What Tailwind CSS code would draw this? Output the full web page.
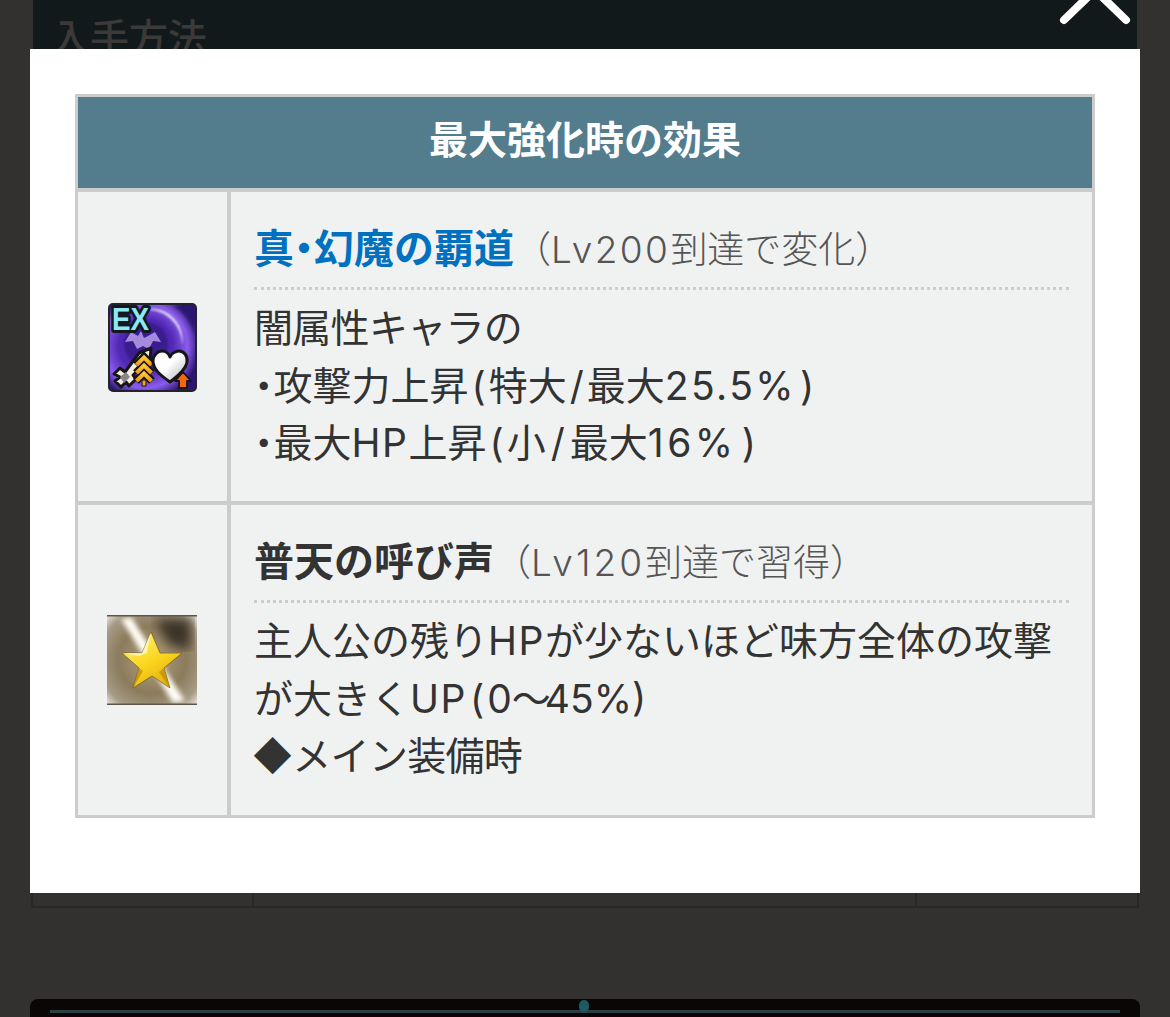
<!DOCTYPE html>
<html lang="ja">
<head>
    <meta charset="UTF-8">
    <meta name="viewport" content="width=device-width, initial-scale=1.0">
    <title>最大強化時の効果</title>
    <script src="https://cdn.jsdelivr.net/npm/@tailwindcss/browser@4"></script>
</head>
<body class="bg-[#323130] font-['Inter','Noto_Sans_CJK_JP','Noto_Sans',sans-serif]">
    <div class="relative w-[1170px] h-[1017px] overflow-hidden">

        <!-- Page behind the overlay -->
        <div class="flex flex-col px-[31px] h-full">
            <section class="h-[560px] shrink-0 px-[2px]">
                <div class="h-[49px] bg-[#12191b] px-[18px] pt-[13px] overflow-hidden">
                    <h2 class="text-[39px] leading-[50px] font-medium text-[#3b3a39]">入手方法</h2>
                </div>
            </section>
            <div class="h-[348px] shrink-0 flex border-2 border-t-0 border-[#282828]">
                <div class="w-[221px] border-r-2 border-[#282828]"></div>
                <div class="flex-1 border-r-2 border-[#282828]"></div>
                <div class="w-[220px]"></div>
            </div>
            <div class="mt-[91px] h-[18px] shrink-0 -mx-px bg-[#0a0605] rounded-t-[8px] relative overflow-hidden">
                <div class="h-[3px] bg-[#2c3f42] absolute inset-x-[20px] top-[11px]"></div>
                <div class="absolute left-[549px] top-[1px] w-[10px] h-[12px] rounded-full bg-[#1e5a63]"></div>
            </div>
        </div>

        <!-- Close button -->
        <svg class="absolute left-[1055px] top-[-20px]" width="80" height="50" viewBox="0 0 80 50" fill="none" stroke="#fff" stroke-width="8" stroke-linecap="round">
            <path d="M9 40 L40 10 L71 40"/>
        </svg>

        <!-- Modal -->
        <div class="absolute left-[30px] top-[49px] w-[1110px] h-[844px] bg-white pt-[45px] px-[45px]">
            <div class="border-[3px] border-[#cccccc] bg-[#f0f2f2]">
                <div class="h-[87px] pb-[4px] bg-[#537c8d] border-b-4 border-[#cccccc] box-content flex items-center justify-center text-white text-[39px] font-bold">最大強化時の効果</div>

                <!-- Row 1 -->
                <div class="flex h-[309px] border-b-4 border-[#cccccc] box-content">
                    <div class="w-[149px] flex items-center justify-center border-r-4 border-[#cccccc] box-content">
                        <svg class="ml-[-1px] mt-[2px]" width="89" height="89" viewBox="0 0 89 89">
                            <defs>
                                <radialGradient id="exBg" cx="42%" cy="48%" r="62%">
                                    <stop offset="0" stop-color="#4a2a9c"/>
                                    <stop offset="0.5" stop-color="#5128b4"/>
                                    <stop offset="0.78" stop-color="#8a5cec"/>
                                    <stop offset="1" stop-color="#2c1670"/>
                                </radialGradient>
                                <linearGradient id="chev" x1="0" y1="0" x2="0" y2="1">
                                    <stop offset="0" stop-color="#ffc93a"/>
                                    <stop offset="1" stop-color="#f09a10"/>
                                </linearGradient>
                                <linearGradient id="heart" x1="0" y1="0" x2="1" y2="1">
                                    <stop offset="0.45" stop-color="#ffffff"/>
                                    <stop offset="1" stop-color="#b0b0b0"/>
                                </linearGradient>
                                <filter id="soft1"><feGaussianBlur stdDeviation="1.200"/></filter>
                            </defs>
                            <rect x="1" y="1" width="87" height="87" rx="4" fill="url(#exBg)" stroke="#23232c" stroke-width="2"/>
                            <circle cx="38" cy="41" r="22" fill="#3a1c8e" filter="url(#soft1)"/>
                            <path d="M34 7 A35 35 0 0 1 74 42 A31 31 0 0 0 34 7 Z" fill="#e3d6f8" filter="url(#soft1)"/>
                            <path d="M66 3 L87 3 L87 30 Q80 12 66 3 Z" fill="#2a1570" opacity=".8" filter="url(#soft1)"/>
                            <!-- bat emblem -->
                            <path d="M33 28 L36 35 L40 33 L47 29 L53 39 L45 38 L41 46 L35 43 L29 46 L25 38 L17 39 L23 29 L30 33 Z" fill="#a58ade"/>
                            <!-- EX -->
                            <text x="4" y="27" font-family="Liberation Sans" font-size="31" font-weight="700" fill="#8fe7f3" stroke="#111820" stroke-width="6" paint-order="stroke" stroke-linejoin="round" textLength="37" lengthAdjust="spacingAndGlyphs">EX</text>
                            <!-- sword -->
                            <path d="M6 71 L12 65 L17 69 L31 50 L43 45 L42 57 L25 72 L28 76 L21 83 L18 79 L13 84 L7 78 L12 74 Z" fill="#f4ecd8" stroke="#15151b" stroke-width="3" stroke-linejoin="round"/>
                            <path d="M12 74 L18 69 L22 74 L16 80 Z" fill="#85858a"/>
                            <!-- chevrons -->
                            <g fill="none" stroke="#15151b" stroke-width="8" stroke-linejoin="miter">
                                <path d="M28 62 L36 54 L44 62"/><path d="M28 70 L36 62 L44 70"/><path d="M28 78 L36 70 L44 78"/>
                            </g>
                            <g fill="none" stroke="url(#chev)" stroke-width="4">
                                <path d="M28.500 62 L36 54.500 L43.500 62"/><path d="M28.500 70 L36 62.500 L43.500 70"/><path d="M28.500 78 L36 70.500 L43.500 78"/>
                            </g>
                            <rect x="34" y="77" width="4" height="6" fill="#f5a415" stroke="#15151b" stroke-width="1"/>
                            <!-- heart -->
                            <path d="M62 79 C52 72 45 66 45 58 C45 52 50 48 54 48 C58 48 61 51 62 54 C63 51 67 48 71 48 C76 48 80 53 79 59 C78 66 70 73 62 79 Z" fill="url(#heart)" stroke="#15151b" stroke-width="3" stroke-linejoin="round"/>
                            <!-- small up arrow -->
                            <path d="M75 69 L83 78 L79 78 L79 85 L71 85 L71 78 L67 78 Z" fill="#f4670e" stroke="#15151b" stroke-width="1.800" stroke-linejoin="round"/>
                        </svg>
                    </div>
                    <div class="flex-1 px-[23px] pt-[32px]">
                        <div class="h-[66px] border-b-[3px] border-dotted border-[#cccccc] flex items-baseline text-[40px] leading-[50px]">
                            <span class="font-bold text-[#0070c0]">真<span class="[font-feature-settings:'palt']">・</span>幻魔の覇道</span><span class="text-[37px] font-light text-[#555555]">（<span class="tracking-[2.400px]">Lv200</span>到達で変化）</span>
                        </div>
                        <div class="mt-[9px] text-[39px] leading-[57.5px] text-[#333333]">
                            <p class="tracking-[-0.7px]">闇属性キャラの</p>
                            <p><span class="[font-feature-settings:'palt']">・</span>攻撃力上昇<span class="mx-[3px]">(</span>特大<span class="mx-[3px]">/</span>最大<span class="tracking-[2.4px]">25.5%</span><span class="ml-[4px]">)</span></p>
                            <p><span class="[font-feature-settings:'palt']">・</span>最大<span class="tracking-[1.5px]">HP</span>上昇<span class="mx-[3px]">(</span>小<span class="mx-[5px]">/</span>最大<span class="tracking-[3.5px]">16%</span><span class="ml-[5px]">)</span></p>
                        </div>
                    </div>
                </div>

                <!-- Row 2 -->
                <div class="flex h-[310px]">
                    <div class="w-[149px] flex items-center justify-center border-r-4 border-[#cccccc] box-content">
                        <svg class="ml-[-1px]" width="90" height="90" viewBox="0 0 90 90">
                            <defs>
                                <radialGradient id="starBg" cx="50%" cy="50%" r="68%">
                                    <stop offset="0" stop-color="#b3a37f"/>
                                    <stop offset="0.55" stop-color="#8c7b5c"/>
                                    <stop offset="0.85" stop-color="#a59a84"/>
                                    <stop offset="1" stop-color="#dcd7cb"/>
                                </radialGradient>
                                <linearGradient id="starFill" x1="0.2" y1="0" x2="0.8" y2="1">
                                    <stop offset="0" stop-color="#fff27a"/>
                                    <stop offset="0.5" stop-color="#fbd61f"/>
                                    <stop offset="1" stop-color="#e0a90c"/>
                                </linearGradient>
                                <filter id="soft2"><feGaussianBlur stdDeviation="2.500"/></filter>
                                <filter id="soft3"><feGaussianBlur stdDeviation="6"/></filter>
                                <clipPath id="starClip"><rect width="90" height="90"/></clipPath>
                            </defs>
                            <g clip-path="url(#starClip)">
                                <rect width="90" height="90" fill="url(#starBg)"/>
                                <path d="M48 4 H84 V34 L62 30 Z" fill="#3b3226" filter="url(#soft3)"/>
                                <path d="M14 4 L24 2 L78 86 L66 88 Z" fill="#fffdf5" filter="url(#soft2)"/>
                                <path d="M0 0 H90 V1.500 H0 Z M0 88.500 H90 V90 H0 Z" fill="#5c564c"/>
                            </g>
                            <path d="M44 17 L53 38 L75 38 L57 53 L63 73 L45 61 L26 73 L32 53 L15 38 L35 38 Z" fill="url(#starFill)" stroke="#6b5a26" stroke-opacity=".7" stroke-width="1" stroke-linejoin="miter"/>
                            <path d="M44 17 L35 38 L15 38 L32 41 L40 38 Z" fill="#fffbd0" opacity=".75"/>
                            <path d="M26 73 L32 53 L36 56 Z M63 73 L57 53 L52 57 Z" fill="#b98a0a" opacity=".7"/>
                        </svg>
                    </div>
                    <div class="flex-1 px-[23px] pt-[32px]">
                        <div class="h-[66px] border-b-[3px] border-dotted border-[#cccccc] flex items-baseline text-[40px] leading-[50px]">
                            <span class="font-bold text-[#333333]">普天の呼び声</span><span class="text-[37px] font-light text-[#555555]">（<span class="tracking-[3px]">Lv120</span>到達で習得）</span>
                        </div>
                        <div class="mt-[9px] text-[39px] leading-[57.5px] text-[#333333]">
                            <p class="whitespace-nowrap">主人公の残り<span class="tracking-[1.5px]">HP</span>が少ないほど味方全体の攻撃</p>
                            <p>が大きく<span class="tracking-[1.5px]">UP</span><span class="mx-[3px]">(</span>0<span class="tracking-[-6px]">～</span>45%)</p>
                            <p class="-ml-[2px] tracking-[-0.7px]">◆メイン装備時</p>
                        </div>
                    </div>
                </div>
            </div>
        </div>
    </div>
</body>
</html>
